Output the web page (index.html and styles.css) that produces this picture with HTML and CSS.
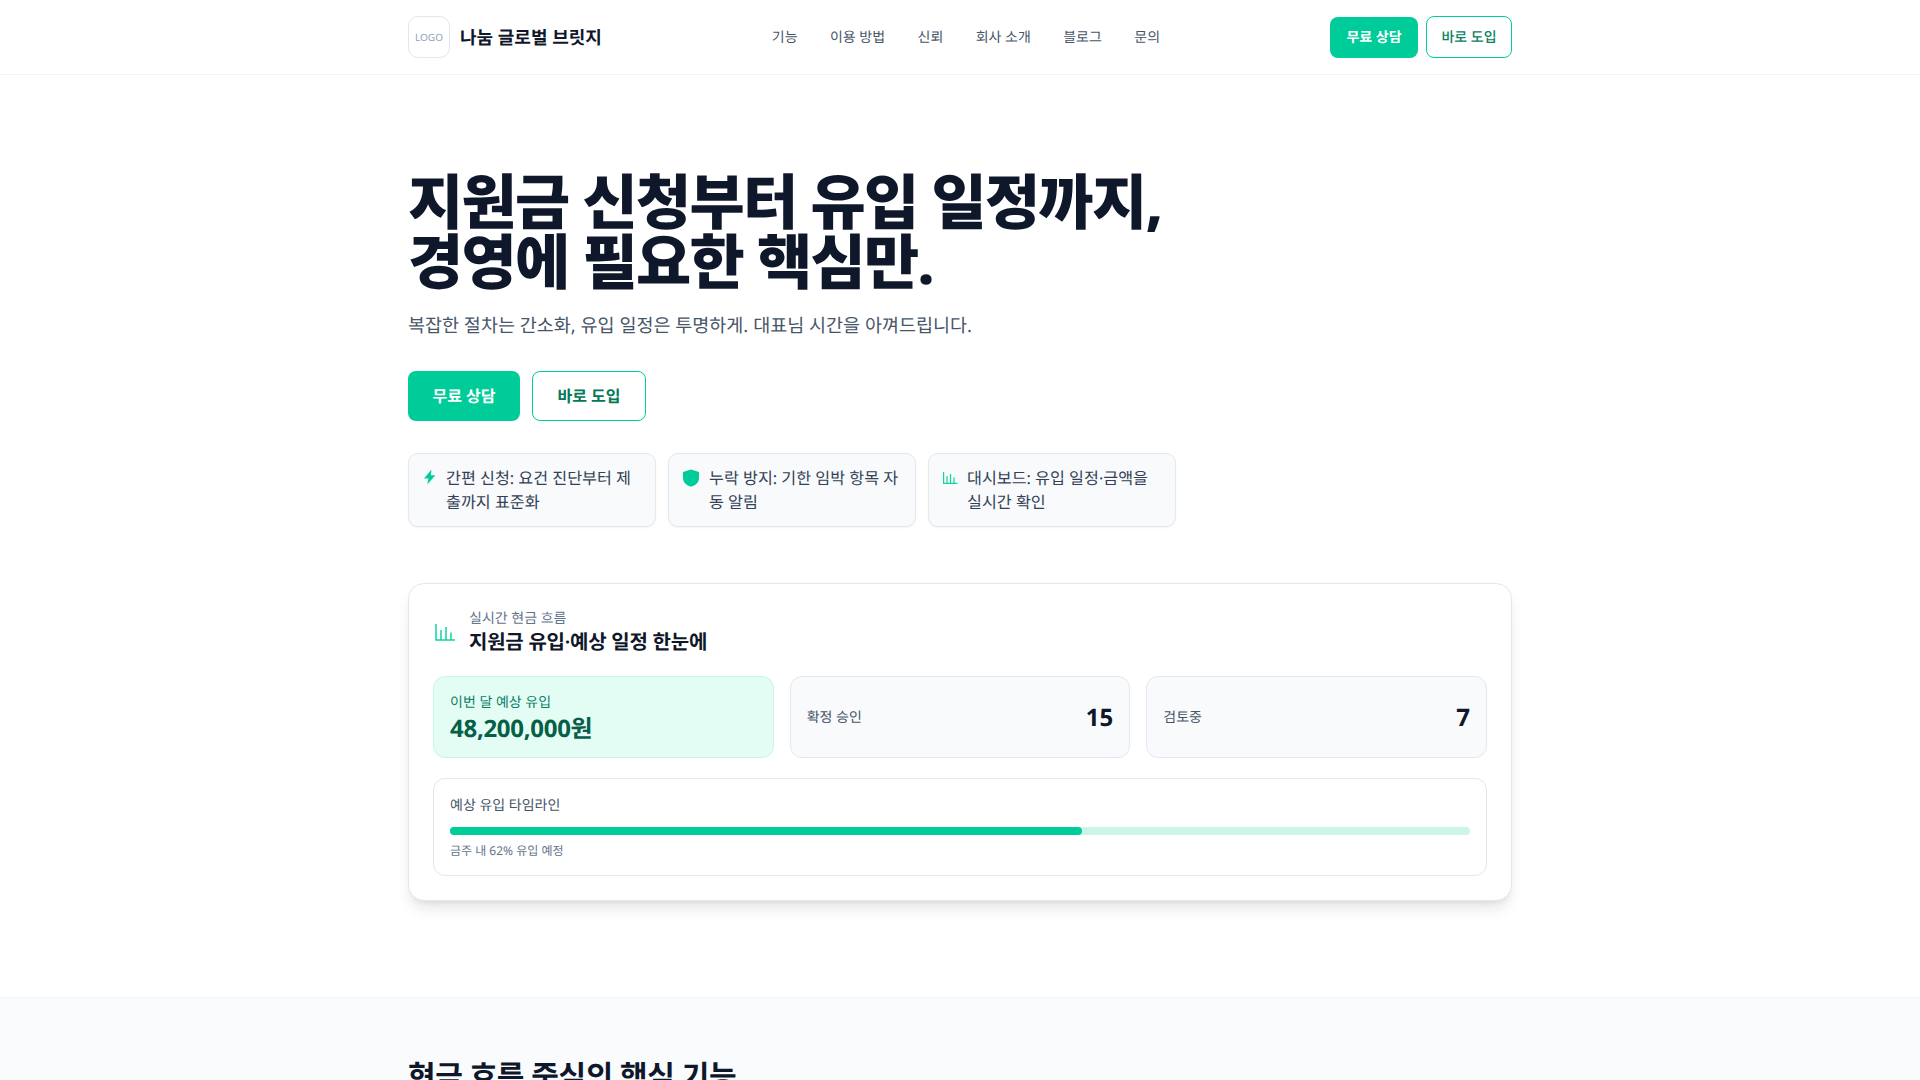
FILE: index.html
```html
<!DOCTYPE html>
<html lang="ko">
  <head>
    <meta charset="UTF-8" />
    <meta name="viewport" content="width=device-width, initial-scale=1.0" />
    <title>나눔 글로벌 브릿지</title>
    <link rel="stylesheet" href="styles.css">
  </head>
  <body>
    <header class="site-header">
      <div class="container header-row">
        <a class="brand" href="#">
          <span class="logo-box">LOGO</span>
          <span class="brand-name">나눔 글로벌 브릿지</span>
        </a>
        <nav class="main-nav">
          <a href="#">기능</a>
          <a href="#">이용 방법</a>
          <a href="#">신뢰</a>
          <a href="#">회사 소개</a>
          <a href="#">블로그</a>
          <a href="#">문의</a>
        </nav>
        <div class="header-actions">
          <a class="btn btn-primary btn-small" href="#">무료 상담</a>
          <a class="btn btn-outline btn-small" href="#">바로 도입</a>
        </div>
      </div>
    </header>

    <main>
      <section class="hero">
        <div class="container">
          <h1>지원금 신청부터 유입 일정까지,<br />경영에 필요한 핵심만.</h1>
          <p class="lead">복잡한 절차는 간소화, 유입 일정은 투명하게. 대표님 시간을 아껴드립니다.</p>
          <div class="hero-actions">
            <a class="btn btn-primary btn-large" href="#">무료 상담</a>
            <a class="btn btn-outline btn-large" href="#">바로 도입</a>
          </div>
          <ul class="points">
            <li class="point">
              <svg class="point-icon icon-bolt" viewBox="0 0 15 16"><path d="M8.500 .5 1 9.500h4.500L4.300 15.500l8-9.300H7.700z" fill="#00cc99" /></svg>
              <span>간편 신청: 요건 진단부터 제출까지 표준화</span>
            </li>
            <li class="point">
              <svg class="point-icon icon-shield" viewBox="0 0 18 18"><path d="M8 .5 0 3v6c0 4.200 3.200 7.400 8 8.700 4.800-1.300 8-4.500 8-8.700V3z" fill="#00cc99" /></svg>
              <span>누락 방지: 기한 임박 항목 자동 알림</span>
            </li>
            <li class="point">
              <svg class="point-icon icon-chart" viewBox="0 0 16 16" fill="none" stroke="#10d3a2" stroke-width="1.200"><path d="M.6 3v11.400H14.500M4 14V7M7.500 14V5M11 14V8.500" /></svg>
              <span>대시보드: 유입 일정·금액을 실시간 확인</span>
            </li>
          </ul>

          <div class="panel">
            <div class="panel-head">
              <svg class="panel-icon" viewBox="0 0 24 24" fill="none" stroke="#10d3a2" stroke-width="1.500"><path d="M3 4v16h19M8 19.500V10M13 19.500V7M18 19.500v-7" /></svg>
              <div>
                <div class="panel-kicker">실시간 현금 흐름</div>
                <div class="panel-title">지원금 유입·예상 일정 한눈에</div>
              </div>
            </div>
            <div class="stats">
              <div class="stat stat-main">
                <div class="stat-main-label">이번 달 예상 유입</div>
                <div class="stat-main-value">48,200,000원</div>
              </div>
              <div class="stat stat-row">
                <span class="stat-label">확정 승인</span>
                <span class="stat-value">15</span>
              </div>
              <div class="stat stat-row">
                <span class="stat-label">검토중</span>
                <span class="stat-value">7</span>
              </div>
            </div>
            <div class="timeline">
              <div class="timeline-title">예상 유입 타임라인</div>
              <div class="track"><div class="track-fill" style="width: 62%"></div></div>
              <div class="timeline-note">금주 내 62% 유입 예정</div>
            </div>
          </div>
        </div>
      </section>

      <section class="features">
        <div class="container">
          <h2>현금 흐름 중심의 핵심 기능</h2>
        </div>
      </section>
    </main>
  </body>
</html>
```

FILE: styles.css
```css
* {
  box-sizing: border-box;
}
body {
  margin: 0;
  font-family: "Noto Sans", "Noto Sans CJK KR", sans-serif;
  color: #0f172a;
  background: white;
  text-rendering: geometricPrecision;
}
a {
  text-decoration: none;
  color: inherit;
}
.container {
  width: 1104px;
  margin: 0 auto;
}
.site-header {
  height: 75px;
  border-bottom: 1px solid #f1f5f9;
}
.header-row {
  height: 74px;
  display: flex;
  align-items: center;
  justify-content: space-between;
}
.brand {
  display: flex;
  align-items: center;
  gap: 10px;
}
.logo-box {
  width: 42px;
  height: 42px;
  display: flex;
  align-items: center;
  justify-content: center;
  border: 1px solid #e2e8f0;
  border-radius: 10px;
  font-size: 10px;
  color: #94a3b8;
}
.brand-name {
  font-size: 18px;
  font-weight: 700;
}
.main-nav {
  display: flex;
  gap: 32.400px;
  padding-top: 1px;
  font-size: 14px;
  line-height: 20px;
  color: #475569;
}
.header-actions {
  display: flex;
  align-items: center;
  gap: 8px;
}
.btn {
  display: flex;
  align-items: center;
  justify-content: center;
  border-radius: 8px;
  font-weight: 600;
}
.btn-primary {
  background: #00cc99;
  color: white;
}
.btn-outline {
  border: 1px solid #00cc99;
  color: #047857;
  background: white;
}
.btn-small {
  height: 41px;
  width: 88px;
  padding-top: 1px;
  font-size: 14px;
  line-height: 20px;
}
.btn-small.btn-outline {
  width: 86px;
  height: 42px;
  font-weight: 500;
  color: #0b8065;
}
.btn-large {
  height: 50px;
  width: 112px;
  font-size: 16px;
  line-height: 24px;
}
.btn-large.btn-outline {
  width: 114px;
}
.hero {
  padding: 96px 0 96px;
}
h1 {
  margin: 0;
  font-size: 60px;
  line-height: 60px;
  font-weight: 800;
  letter-spacing: -0.028em;
}
.lead {
  margin: 21px 0 0;
  font-size: 18.500px;
  line-height: 28px;
  color: #475569;
}
.hero-actions {
  display: flex;
  gap: 12px;
  margin-top: 31px;
}
.points {
  list-style: none;
  margin: 32px 0 0;
  padding: 0;
  width: 768px;
  display: grid;
  grid-template-columns: repeat(3, 1fr);
  gap: 12px;
}
.point {
  display: flex;
  align-items: flex-start;
  gap: 8px;
  padding: 12px 14px;
  background: #f8fafc;
  border: 1px solid #e2e8f0;
  border-radius: 10px;
  box-shadow: 0 1px 2px rgba(0, 0, 0, 0.05);
  font-size: 16.200px;
  line-height: 24px;
  color: #334155;
}
.point-icon {
  flex: none;
  height: 18px;
  margin-top: 3px;
}
.icon-bolt {
  width: 15px;
  height: 16px;
}
.icon-shield {
  width: 18px;
}
.icon-chart {
  width: 16px;
  height: 16px;
}
.panel {
  margin-top: 56px;
  padding: 24px;
  border: 1px solid #e2e8f0;
  border-radius: 16px;
  background: white;
  box-shadow: 0 10px 15px -3px rgba(0, 0, 0, 0.1), 0 4px 6px -4px rgba(0, 0, 0, 0.1);
}
.panel-head {
  display: flex;
  align-items: center;
  gap: 12px;
}
.panel-icon {
  width: 24px;
  height: 24px;
}
.panel-kicker {
  padding-top: 1px;
  font-size: 14px;
  line-height: 20px;
  color: #64748b;
}
.panel-title {
  margin-top: -1px;
  padding-bottom: 1px;
  font-size: 20px;
  line-height: 27px;
  font-weight: 600;
  letter-spacing: -0.012em;
}
.stats {
  display: grid;
  grid-template-columns: repeat(3, 1fr);
  gap: 16px;
  margin-top: 20px;
}
.stat {
  height: 82px;
  padding: 16px;
  border: 1px solid #e2e8f0;
  border-radius: 12px;
  background: #f8fafc;
}
.stat-main {
  background: #e3fdf5;
  border-color: #c8f5e8;
}
.stat-main-label {
  font-size: 14px;
  line-height: 20px;
  color: #0b8065;
}
.stat-main-value {
  font-size: 24px;
  line-height: 32px;
  font-weight: 700;
  letter-spacing: -0.012em;
  color: #065f46;
}
.stat-row {
  display: flex;
  align-items: center;
  justify-content: space-between;
}
.stat-label {
  padding-top: 2px;
  font-size: 14px;
  line-height: 20px;
  color: #475569;
}
.stat-value {
  padding-top: 1px;
  font-size: 24px;
  line-height: 32px;
  font-weight: 700;
}
.timeline {
  margin-top: 20px;
  padding: 16px;
  border: 1px solid #e2e8f0;
  border-radius: 12px;
}
.timeline-title {
  padding-top: 1px;
  font-size: 14px;
  line-height: 20px;
  color: #475569;
}
.track {
  height: 8px;
  margin-top: 11px;
  border-radius: 999px;
  background: #ccf5e9;
}
.track-fill {
  height: 100%;
  border-radius: 999px;
  background: #00cc99;
}
.timeline-note {
  margin-top: 8px;
  font-size: 12px;
  line-height: 16px;
  color: #64748b;
}
.features {
  padding: 60px 0 200px;
  background: #fafbfd;
  border-top: 1px solid #f1f5f9;
}
h2 {
  margin: 0;
  font-size: 30px;
  line-height: 36px;
  font-weight: 700;
  letter-spacing: -0.015em;
}
```
